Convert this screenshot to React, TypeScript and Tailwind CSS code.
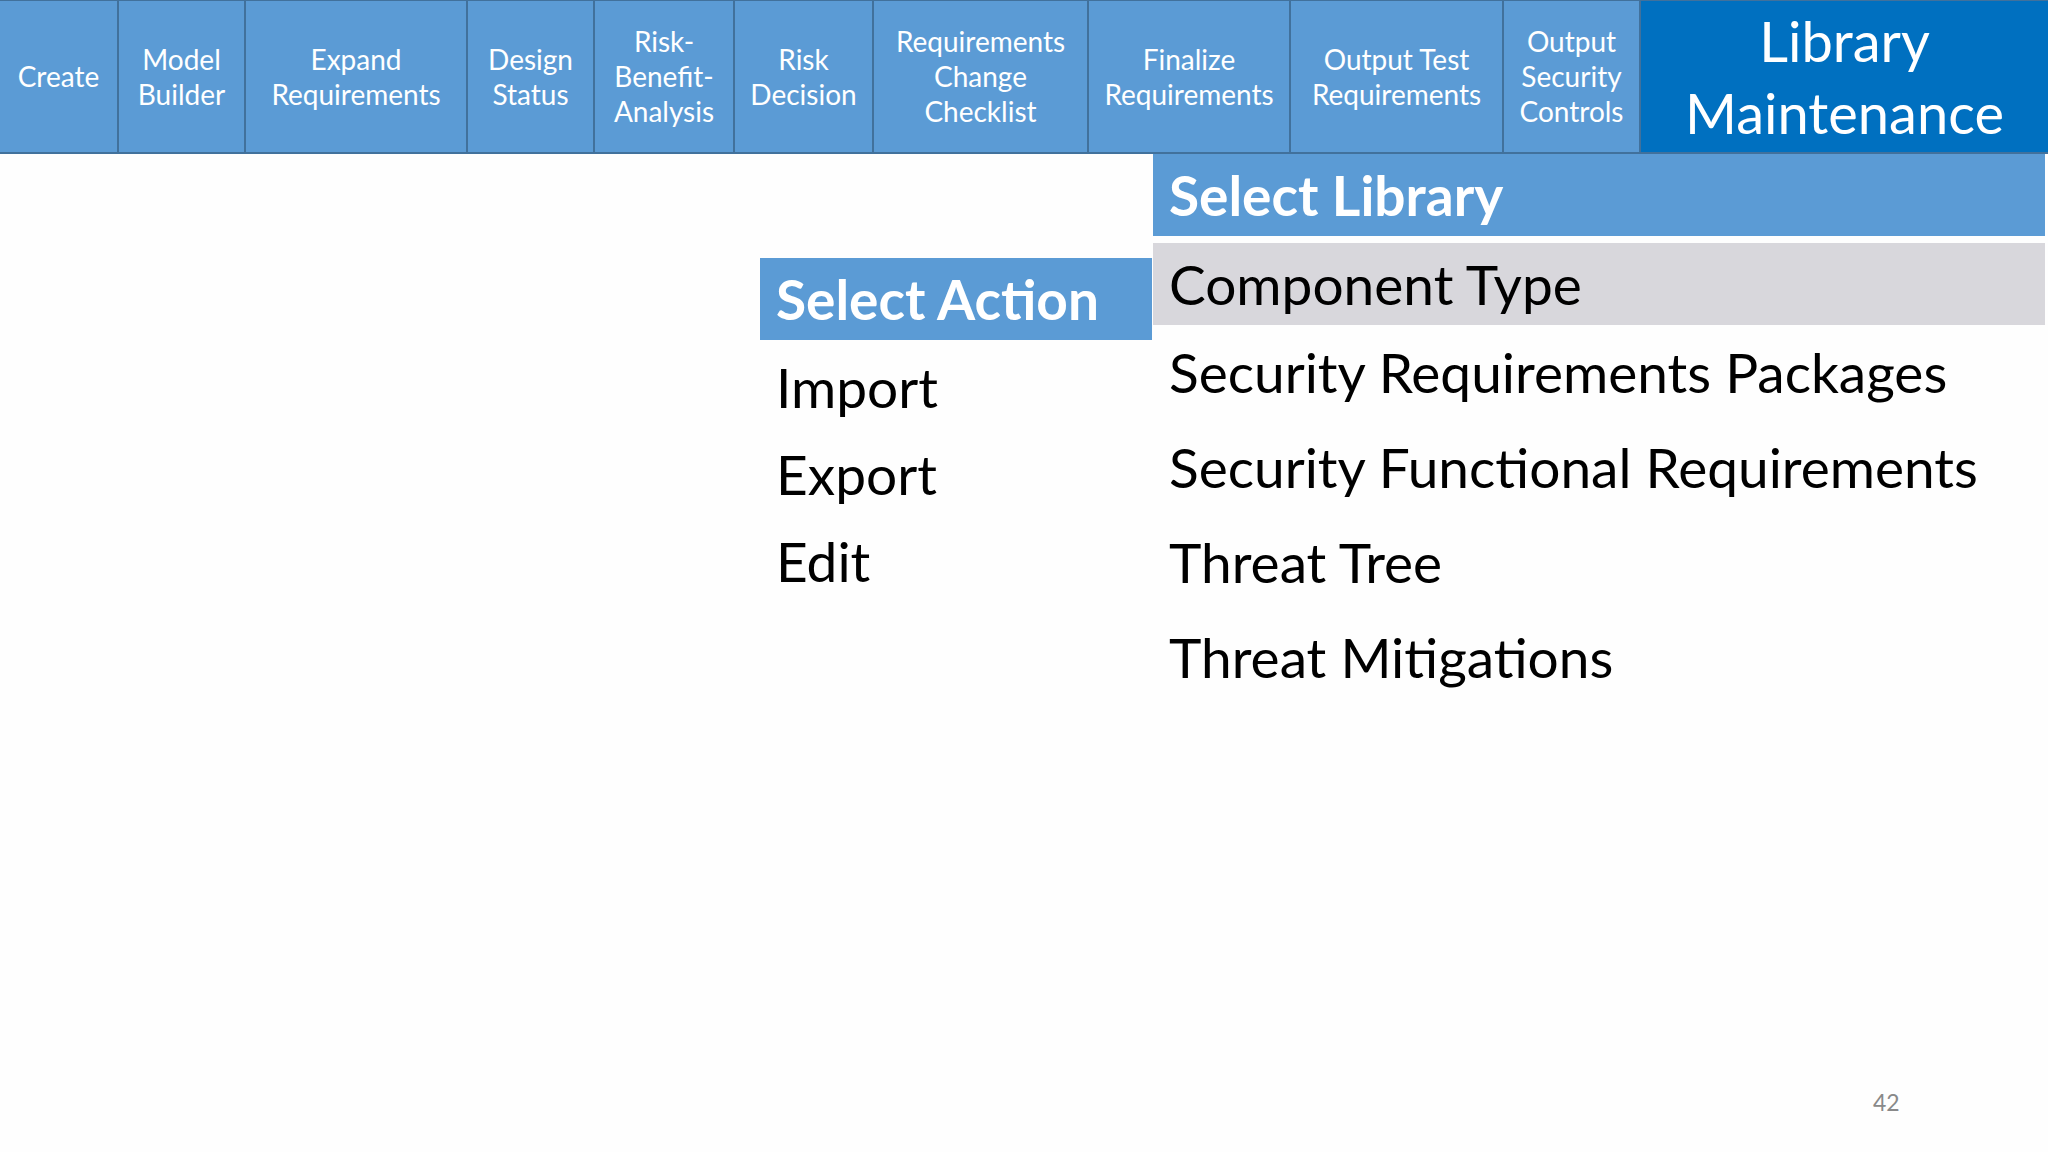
const tabs = [
  { label: ['Create'], w: 'w-[119px]' },
  { label: ['Model', 'Builder'], w: 'w-[127px]' },
  { label: ['Expand', 'Requirements'], w: 'w-[222px]' },
  { label: ['Design', 'Status'], w: 'w-[127px]' },
  { label: ['Risk-', 'Benefit-', 'Analysis'], w: 'w-[140px]' },
  { label: ['Risk', 'Decision'], w: 'w-[139px]' },
  { label: ['Requirements', 'Change', 'Checklist'], w: 'w-[215px]' },
  { label: ['Finalize', 'Requirements'], w: 'w-[202px]' },
  { label: ['Output Test', 'Requirements'], w: 'w-[213px]' },
  { label: ['Output', 'Security', 'Controls'], w: 'w-[137px]' },
]

const actions = ['Import', 'Export', 'Edit']

const libraries = [
  'Security Requirements Packages',
  'Security Functional Requirements',
  'Threat Tree',
  'Threat Mitigations',
]

export default function App() {
  return (
    <div className="w-[2048px] h-[1152px] bg-[#fefefe] flex flex-col font-['Lato','Open_Sans',sans-serif] overflow-hidden">
      {/* top step bar */}
      <nav className="flex h-[154px] shrink-0 border-b-2 border-t border-[#41719c]">
        {tabs.map((t) => (
          <div
            key={t.label.join(' ')}
            className={`${t.w} shrink-0 bg-[#5b9bd5] border-r-2 border-[#41719c] flex flex-col items-center justify-center text-white text-[28px] leading-[35px] text-center`}
          >
            {t.label.map((l) => (
              <span key={l}>{l}</span>
            ))}
          </div>
        ))}
        <div className="flex-1 bg-[#0070c0] flex flex-col items-center justify-center text-white text-[56px] leading-[72px] text-center">
          <span>Library</span>
          <span>Maintenance</span>
        </div>
      </nav>

      <div className="flex pl-[760px] items-start">
        {/* actions */}
        <div className="w-[392px] mt-[104px] flex flex-col">
          <div className="h-[82px] bg-[#5b9bd5] px-4 flex items-center text-white font-bold text-[55px]">
            Select Action
          </div>
          <div className="mt-1 flex flex-col">
            {actions.map((a) => (
              <div key={a} className="h-[87px] px-4 flex items-center text-black text-[55px]">
                {a}
              </div>
            ))}
          </div>
        </div>

        {/* libraries */}
        <div className="w-[892px] ml-px flex flex-col">
          <div className="h-[82px] bg-[#5b9bd5] px-4 flex items-center text-white font-bold text-[55px]">
            Select Library
          </div>
          <div className="mt-[7px] h-[82px] bg-[#d8d7dc] px-4 flex items-center text-black text-[55px]">
            Component Type
          </div>
          {libraries.map((l) => (
            <div key={l} className="h-[95px] px-4 flex items-center text-black text-[55px]">
              {l}
            </div>
          ))}
        </div>
      </div>

      <div className="mt-auto mb-[33px] pl-[1873px] text-[23px] text-[#898989]">42</div>
    </div>
  )
}
